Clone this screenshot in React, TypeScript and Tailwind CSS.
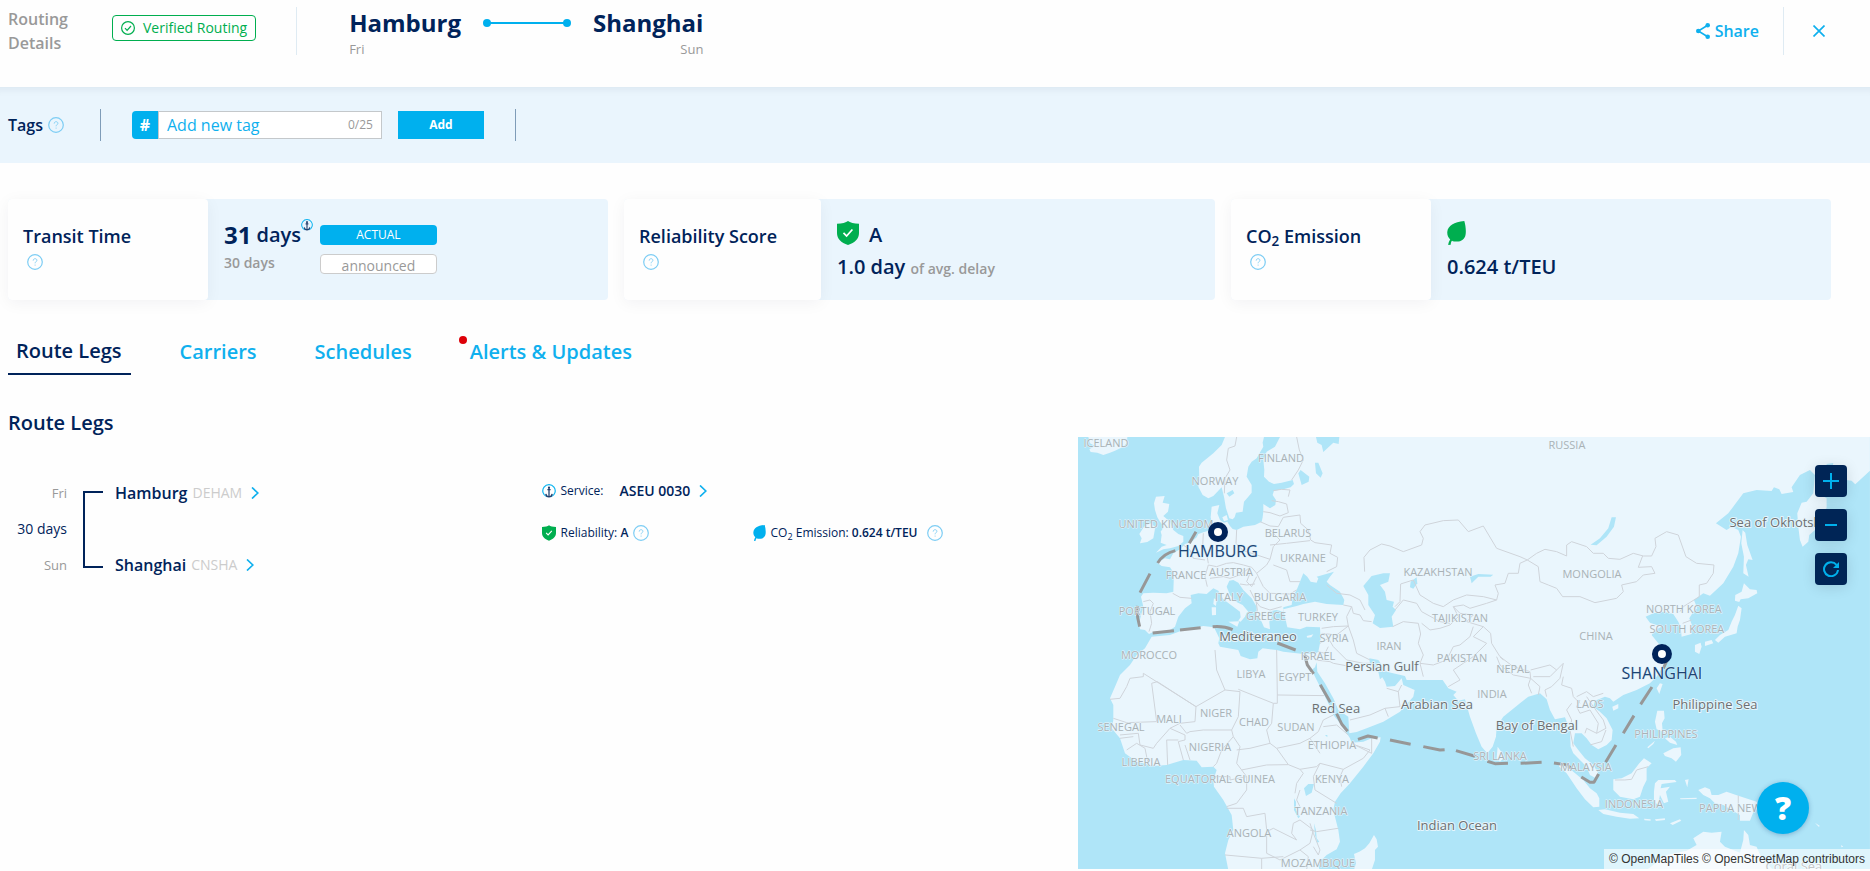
import type { ReactNode } from "react";

/* ---------- icons ---------- */

function HelpIcon({ className = "" }: { className?: string }) {
  return (
    <svg viewBox="0 0 16 16" className={`size-4 shrink-0 ${className}`} fill="none" stroke="#7dcdf4" aria-hidden="true">
      <circle cx="8" cy="8" r="7.3" strokeWidth="1.2" />
      <path d="M6.2 6.6c0-1.2.8-1.9 1.9-1.9s1.8.7 1.8 1.6c0 1.3-1.8 1.5-1.8 3M8.1 10.6v1" strokeWidth="0.9" />
    </svg>
  );
}

function ShieldIcon({ className }: { className: string }) {
  return (
    <svg viewBox="0 0 22 24" className={className} aria-hidden="true">
      <path d="M11 0C13 1.500 17 2.700 22 2.700V12c0 5.500-4 9.800-11 12C4 21.800 0 17.500 0 12V2.700C5 2.700 9 1.500 11 0z" fill="#00ae4f" />
      <path d="m6.500 11.800 3.100 3.300 5.800-6.600" fill="none" stroke="#fff" strokeWidth="1.700" />
    </svg>
  );
}

function LeafIcon({ className }: { className: string }) {
  return (
    <svg viewBox="0 0 19 24" className={className} fill="currentColor" aria-hidden="true">
      <path d="M17.300 0c1.300 4.500 1.900 9.500 1.300 13.500-.7 4.800-4.300 7.200-9 7.100-1.800 0-3.500-.2-4.600-.8-.9 1-1.200 2.200-1.300 3.900l-2.500.2c.2-2 .9-4 2-5.500C1.200 16.500 0 14 .3 10.800.9 4.700 7 .900 17.300 0z" />
    </svg>
  );
}

function AnchorIcon({ className }: { className: string }) {
  return (
    <svg viewBox="0 0 14 14" className={className} fill="none" aria-hidden="true">
      <path d="M4.800 12.700A6.200 6.200 0 1 1 9.200 12.700" stroke="#0db4f0" strokeWidth="1.200" />
      <path d="M7 3.500v9.300M5.400 5.700h3.200M3.800 9.800c.3 2 1.400 3 3.200 3s2.900-1 3.200-3" stroke="#24406e" strokeWidth="1.300" />
      <circle cx="7" cy="3.500" r="1.100" fill="#24406e" />
    </svg>
  );
}

function Chevron() {
  return (
    <svg viewBox="0 0 8 12" className="h-3 w-2 shrink-0" fill="none" stroke="#0fb0ee" strokeWidth="1.700" aria-hidden="true">
      <path d="m1 .5 5.800 5.500L1 11.500" />
    </svg>
  );
}

/* ---------- summary cards ---------- */

function Card({ title, children }: { title: ReactNode; children: ReactNode }) {
  return (
    <section className="grid h-[101px] grid-cols-[1fr_2fr] rounded-sm bg-[#eaf5fd]">
      <div className="rounded-sm bg-[#fefefe] pt-[23px] pl-[15px] shadow-[0_3px_16px_rgba(0,20,60,0.05)]">
        <h2 className="text-lg/7 font-semibold">{title}</h2>
        <button type="button" aria-label="More information" className="mt-1 ml-1 block">
          <HelpIcon />
        </button>
      </div>
      <div className="pl-4">{children}</div>
    </section>
  );
}

const Co2 = () => (
  <>
    CO<sub className="bottom-[-3px] text-[0.75em]">2</sub>
  </>
);

/* ---------- map ---------- */

const mainland =
  "M465 21 455 45 430 70 395 98 387 110 388 150 385 170 398 195 415 205 430 198 445 182 455 172 462 200 468 235 478 265 488 268 494 262 498 248 518 245 522 215 535 200 545 188 545 165 530 140 535 110 545 95 560 85 580 50 578 38 582 21 630 21 615 50 590 65 580 90 583 120 582 140 597 155 612 162 635 158 668 150 672 162 662 172 640 178 612 182 608 195 618 210 616 225 600 235 580 222 580 245 578 262 575 275 555 285 520 290 500 300 488 297 480 288 472 275 462 278 450 270 442 250 448 225 425 230 422 262 428 290 415 302 400 307 385 312 380 322 365 335 345 342 330 358 310 370 300 388 285 385 262 398 275 408 300 412 312 430 310 485 290 490 250 488 220 490 213 500 220 530 207 580 210 598 225 600 237 612 250 606 300 600 315 590 325 560 345 535 365 520 362 495 385 490 410 492 430 475 445 482 460 508 490 530 510 545 512 562 505 572 512 575 525 560 530 548 535 545 518 525 498 515 480 495 470 470 478 452 490 450 505 458 520 480 545 505 560 530 560 555 575 575 582 592 600 598 598 575 605 560 595 545 620 540 640 545 640 532 665 525 668 500 680 480 690 455 700 430 712 440 722 455 740 458 745 445 740 440 792 425 780 440 770 455 780 465 810 485 823 510 820 525 770 522 735 515 700 522 680 528 640 538 645 560 652 592 690 598 710 590 750 592 752 630 745 665 735 672 700 672 640 665 620 660 578 655 565 665 562 685 540 688 512 678 505 660 450 650 445 640 448 625 432 592 400 588 340 600 300 615 245 620 225 655 200 675 180 705 150 735 135 770 120 805 130 825 130 870 125 895 150 925 165 970 200 995 250 1008 290 1005 340 990 380 992 395 1012 430 1010 440 1020 430 1050 432 1070 460 1110 485 1155 490 1200 475 1230 465 1270 475 1320 748 1320 745 1300 770 1275 800 1258 810 1235 805 1200 795 1160 790 1140 795 1115 812 1090 840 1060 880 1010 910 970 930 935 932 922 905 925 880 935 845 938 840 925 815 885 790 855 780 830 760 790 740 750 725 720 735 712 740 697 742 725 765 760 790 805 805 840 835 860 838 910 860 906 890 895 940 875 990 845 1030 800 1034 780 1000 765 995 745 975 768 950 770 945 755 937 742 930 748 925 725 900 700 898 685 925 690 950 725 1005 738 1010 750 1040 750 1118 750 1135 775 1160 785 1150 795 1165 812 1185 808 1200 860 1218 910 1235 950 1252 970 1268 950 1278 920 1280 890 1300 860 1350 820 1375 800 1410 790 1430 808 1440 840 1455 868 1485 862 1500 900 1502 950 1510 970 1530 990 1550 1010 1560 1035 1578 1045 1585 1030 1570 1005 1545 985 1525 960 1510 940 1515 910 1535 910 1550 925 1565 945 1585 958 1610 945 1625 930 1628 900 1610 865 1590 845 1570 830 1575 812 1605 800 1620 805 1630 815 1660 795 1700 780 1740 760 1760 740 1785 700 1792 660 1765 640 1745 615 1755 600 1775 590 1740 578 1727 560 1750 550 1780 545 1810 552 1825 575 1832 590 1835 620 1865 612 1868 590 1858 565 1870 545 1882 535 1872 510 1900 490 1920 497 1960 460 1990 410 2005 370 2013 320 2005 300 1985 290 1970 300 1938 280 1975 250 2020 190 2060 180 2105 183 2112 172 2128 178 2135 192 2170 186 2165 172 2190 135 2220 120 2235 135 2230 190 2210 215 2195 218 2182 250 2185 290 2190 330 2198 350 2215 335 2218 315 2235 300 2245 250 2270 235 2270 205 2258 198 2270 175 2330 150 2345 152 2356 163 2400 122 2400 21Z";

const islands = [
  // Iceland, Great Britain, Ireland
  "M55 21 60 40 75 48 58 58 62 66 82 68 100 75 120 68 135 62 160 50 170 40 172 21Z",
  "M258 200 284 198 278 218 298 222 294 245 280 258 300 275 310 300 325 312 340 318 340 335 325 348 300 355 280 358 258 368 275 350 290 345 272 338 275 315 272 305 282 290 270 275 262 262 255 240 252 220Z",
  "M222 290 240 280 256 290 250 325 232 336 210 340 215 325 208 312Z",
  // Mediterranean islands and Zealand
  "M432 505 440 510 438 528 430 522ZM425 532 438 532 438 555 426 556ZM475 575 508 574 502 590ZM598 610 625 612 625 616 600 615ZM710 618 722 615 730 613 724 622 712 623ZM457 262 470 255 474 270 462 274Z",
  // Madagascar
  "M912 1215 920 1228 924 1250 915 1260 915 1290 905 1320 852 1320 858 1300 852 1272 868 1265 885 1255 898 1240Z",
  // Sri Lanka, Hainan, Taiwan
  "M1283 950 1296 968 1300 985 1290 995 1280 985ZM1627 830 1645 822 1645 835 1630 842ZM1770 760 1778 762 1768 792 1760 775Z",
  // Sumatra and Java
  "M1465 1000 1495 1010 1510 1025 1540 1050 1560 1075 1580 1090 1588 1105 1588 1130 1570 1132 1545 1108 1520 1075 1490 1030 1468 1010Z",
  "M1585 1140 1605 1138 1650 1148 1690 1152 1708 1165 1680 1166 1640 1160 1600 1152ZM1722 1166 1742 1168 1742 1172 1724 1171ZM1755 1168 1785 1165 1785 1170 1758 1173ZM1800 1180 1830 1168 1834 1172 1808 1185Z",
  // Borneo and Sulawesi
  "M1630 1048 1655 1045 1685 1030 1708 1000 1722 985 1745 1000 1730 1015 1730 1050 1720 1070 1710 1100 1690 1108 1650 1100 1630 1080Z",
  "M1755 1060 1765 1050 1815 1050 1820 1056 1775 1062 1772 1075 1800 1070 1788 1085 1795 1115 1782 1120 1770 1095 1765 1125 1752 1115 1752 1085Z",
  // New Guinea and small neighbours
  "M1885 1080 1905 1072 1920 1078 1925 1095 1945 1095 1970 1085 2005 1097 2060 1115 2100 1150 2075 1150 2055 1135 2040 1172 2010 1172 2010 1155 1960 1125 1935 1120 1920 1105 1900 1095ZM1830 1105 1880 1103 1880 1107 1832 1108ZM1845 1050 1856 1048 1852 1072ZM2235 1178 2250 1188 2246 1190ZM2314 1245 2320 1250 2314 1252Z",
  // Philippines
  "M1762 842 1782 842 1784 865 1776 880 1778 900 1795 905 1790 910 1760 898 1755 875ZM1732 952 1755 932 1750 942 1735 955ZM1785 925 1800 920 1818 935 1822 945 1800 938ZM1780 970 1810 955 1832 952 1834 975 1818 995 1805 985 1785 978Z",
  // Australia
  "M1730 1320 1790 1275 1850 1262 1880 1245 1870 1225 1900 1205 1925 1208 1955 1205 1950 1235 1965 1250 2010 1268 2020 1230 2022 1200 2035 1215 2040 1245 2060 1250 2075 1285 2110 1320Z",
  // Sakhalin, Japan
  "M2018 300 2026 308 2032 345 2048 390 2035 388 2028 405 2036 440 2020 430 2022 380 2014 340Z",
  "M2022 460 2040 478 2060 480 2062 490 2035 505 2012 508 2008 516 1995 512 1996 495 2015 485ZM2005 527 2015 535 2010 570 2003 590 2000 610 1965 620 1945 638 1935 630 1950 615 1975 600 1985 575 1995 555ZM1905 635 1925 630 1930 640 1905 648ZM1875 645 1892 638 1895 650 1888 672 1875 665Z",
];

const lakes = [
  "M738 21 808 21 806 42 790 38 760 66 755 45 742 38Z",
  "M685 130 692 120 718 140 716 155 695 165ZM735 98 745 98 758 130 752 143 738 130ZM470 190 488 180 493 190 478 200Z",
  "M905 438 940 430 960 430 955 455 930 465 945 485 950 510 972 515 968 530 978 540 965 560 970 590 930 594 908 580 915 555 895 525 895 495 880 468Z",
  "M1022 455 1040 442 1042 460 1030 476 1020 472Z",
  "M1200 440 1225 432 1270 434 1262 440 1225 440 1205 460ZM1562 344 1590 325 1615 295 1625 262 1638 262 1632 290 1610 320 1580 346Z",
  "M702 1075 715 1062 732 1062 725 1088 708 1098ZM672 1105 678 1115 678 1140 690 1160 685 1165 672 1140ZM732 1180 738 1200 740 1225 748 1235 742 1238 735 1215ZM765 915 772 915 772 922Z",
  "M2270 102 2290 99 2288 112 2270 112Z",
  "M1150 935 1160 935 1160 942Z",
];

const borders =
  "M500 21 495 48 475 55 470 90 480 120 465 145 463 190M680 21 688 60 700 90 685 120 665 150M610 182 635 178 660 180 655 200M605 212 625 215 650 222 655 248M580 245 600 248 630 258 655 248M570 275 600 288 625 290 640 262 690 255 692 280 715 300 722 330 735 338 785 345 780 370 803 382 800 410 770 425M500 300 498 340 520 362 570 378 600 388 610 350 630 330 600 300M600 345 650 340 720 332M600 388 590 405 560 430 545 412 520 405 490 398 470 400 440 410 415 405 405 440 412 470M400 310 398 350 410 370 415 400M340 345 360 360 370 385 405 390M420 445 460 440 480 445 510 435 540 412M540 430 530 455 545 470 560 440M560 430 580 470 600 490 660 492 680 480M610 405 650 420 660 455 690 455M510 462 530 465 555 462M540 480 555 510 570 530 600 540 635 530M555 490 562 540 560 550M308 490 330 502 365 505M220 515 240 510 250 520 240 545 245 580 237 605M770 465 800 490 840 495 870 510 885 540M820 525 845 530 850 550 870 555 880 572 905 575M845 530 830 560 835 588 790 590 755 595M835 588 850 630 860 670 900 690M755 610 800 615 835 588M750 640 775 625 790 650 830 690 880 700 905 700M745 665 765 670 775 650M735 690 780 695 790 700 870 715M884 425 882 382 900 360 935 342 960 348 1000 365 1055 345 1060 325 1050 305 1065 285 1120 272 1165 270 1195 305 1240 288 1280 355 1350 380 1372 390 1400 370 1425 358 1460 365 1490 378 1490 345 1505 335 1550 350 1570 370 1600 370 1615 385 1650 388 1690 370 1720 378 1745 378 1758 350 1755 325 1790 305 1825 315 1848 380 1880 400 1932 405 1930 430 1910 460 1888 465 1888 500 1840 530 1830 545M1372 390 1405 410 1410 455 1435 465 1460 475 1478 500 1530 500 1575 518 1640 505 1660 485 1655 465 1700 455 1720 435 1755 430 1745 410 1705 412 1718 378M1372 390 1350 400 1345 430 1315 430 1305 460 1275 465 1285 490 1280 510 1240 500 1190 495 1150 510 1120 530 1090 520 1050 495 1030 450 992 462 990 515 975 530M975 540 1000 510 1040 520 1055 545 1110 575 1140 580M968 590 1000 575 1045 580 1052 612 1045 640 1060 675 1050 700 1060 740M1055 580 1080 600 1110 595 1140 585 1165 560 1150 530 1180 525 1200 535 1250 520 1280 510M1150 530 1170 550 1210 555 1190 575 1240 590 1262 610 1265 640 1290 680 1300 690M1050 700 1090 705 1130 690 1150 650 1170 645 1200 620 1210 590M1240 590 1210 620 1250 640 1210 680 1180 700 1150 720 1170 750 1135 770M1290 680 1330 710 1380 725 1382 745 1330 735 1290 705 1280 680M1382 720 1440 705 1460 720 1440 740 1390 740M1382 745 1410 770 1405 795M1382 745 1375 765 1385 790M1460 720 1480 700 1470 745 1445 770 1425 780 1430 800M1480 740 1475 765 1505 775 1510 800 1530 820M1505 820 1490 840 1505 870 1500 900 1510 950M1530 810 1520 830 1530 850 1560 840 1585 880 1580 910 1550 895 1545 910M1520 800 1550 785 1570 800 1600 790M1550 800 1570 830 1600 870 1608 895 1580 910M1560 945 1595 935 1608 900M1635 1050 1665 1050 1685 1048 1700 1020 1735 1010M2005 1097 2005 1170M1865 570 1838 580M840 870 900 855 945 835 990 830 985 785 950 775M945 835 955 860M985 785 995 765M620 660 622 795 762 797M622 795 622 820 610 820 505 778M435 660 440 720 465 780 510 785 505 860 485 900M465 780 378 830 220 730 220 740 180 745 170 770 150 805 120 808M245 760 262 755 378 830M245 760 260 875 170 878 130 865M378 830 375 875 330 880 300 895 260 940 250 955 210 945 205 910 150 915M330 885 350 910 360 905 400 900 485 900 490 920 455 960 440 1000 430 1010M300 895 345 915 345 930 325 935 340 990M290 930 325 930M290 930 293 1005M345 945 360 990M170 960 200 940 225 955 235 1005M150 925 190 920M610 820 605 880 590 900 600 940 620 955 690 940 720 925 750 970M490 920 510 950 500 1000 515 1020 590 1005 655 1004 690 1018 740 1010 750 1000 820 1018 880 985 900 960 855 945M620 955 655 1004M500 960 540 955 600 940M750 1000 730 1040 735 1080 800 1120M690 1018 700 1030 680 1060 675 1090M815 1070 810 1040 820 1018M720 925 745 905 760 870 790 855M760 890 800 885 835 915M905 925 905 970 855 945M430 1040 480 1040 480 1050 530 1040 515 1020M530 1040 530 1080 500 1120 470 1130M470 1135 520 1135 530 1160 585 1150 590 1200 590 1270 630 1290 690 1260 720 1240 730 1200 690 1170 670 1180 665 1210 680 1230 610 1195 590 1205M465 1275 575 1285 640 1280M575 1285 575 1320M690 1080 680 1110 690 1130M720 1200 740 1205 805 1195M720 1180 730 1210 750 1260 745 1275 730 1250M690 1260 715 1280 710 1320";

const route =
  "M378 305 358 340M316 362C295 367 276 378 263 399M240 431 210 488M202 528C200 550 203 570 209 590M248 609 312 602M330 600 392 593M428 590C450 588 470 591 488 599M524 607 584 626M622 639 677 660M704 675 712 705 731 732M751 764 781 817M800 851 815 882 833 904M864 928 894 918 923 924M960 930 1022 943M1060 950 1110 960 1124 959M1158 962 1215 979M1252 994 1275 1001 1314 1000M1352 1000 1415 997M1452 999 1485 1004 1506 1015M1534 1041 1560 1057 1572 1057 1586 1032M1607 997 1638 945M1660 910 1692 857M1712 823 1746 771M1780 715 1792 690";

const countries: [string, number, number][] = [
  ["ICELAND", 28, 10], ["FINLAND", 203, 25], ["NORWAY", 137, 48], ["UNITED KINGDOM", 88, 91], ["BELARUS", 210, 100],
  ["UKRAINE", 225, 125], ["FRANCE", 108, 142], ["AUSTRIA", 153, 139], ["ITALY", 151, 164], ["BULGARIA", 202, 164],
  ["GREECE", 188, 183], ["TURKEY", 240, 184], ["PORTUGAL", 69, 178], ["MOROCCO", 71, 222], ["SYRIA", 256, 205],
  ["ISRAEL", 240, 223], ["IRAN", 311, 213], ["KAZAKHSTAN", 360, 139], ["TAJIKISTAN", 382, 185], ["PAKISTAN", 384, 225],
  ["NEPAL", 435, 236], ["INDIA", 414, 261], ["CHINA", 518, 203], ["MONGOLIA", 514, 141], ["RUSSIA", 489, 12],
  ["NORTH KOREA", 606, 176], ["SOUTH KOREA", 609, 196], ["LAOS", 512, 271], ["PHILIPPINES", 588, 301], ["MALAYSIA", 508, 334],
  ["SRI LANKA", 422, 323], ["INDONESIA", 556, 371], ["PAPUA NEW GUINEA", 674, 375], ["LIBYA", 173, 241], ["EGYPT", 217, 244],
  ["MALI", 91, 286], ["NIGER", 138, 280], ["CHAD", 176, 289], ["SUDAN", 218, 294], ["SENEGAL", 43, 294],
  ["NIGERIA", 132, 314], ["LIBERIA", 63, 329], ["ETHIOPIA", 254, 312], ["EQUATORIAL GUINEA", 142, 346], ["KENYA", 254, 346],
  ["TANZANIA", 243, 378], ["ANGOLA", 171, 400], ["MOZAMBIQUE", 240, 430],
];

const seas: [string, number, number][] = [
  ["Mediteraneo", 180, 204], ["Persian Gulf", 304, 234], ["Red Sea", 258, 276], ["Arabian Sea", 359, 272],
  ["Bay of Bengal", 459, 293], ["Philippine Sea", 637, 272], ["Indian Ocean", 379, 393], ["Coral Sea", 716, 434],
  ["Sea of Okhotsk", 697, 90],
];

const ports: [string, number, number][] = [
  ["HAMBURG", 140, 95],
  ["SHANGHAI", 584, 217],
];

function RouteMap() {
  return (
    <svg viewBox="0 0 792 432" preserveAspectRatio="xMidYMid slice" className="block w-full" role="img" aria-label="Route map">
      <rect width="792" height="432" fill="#afe5f8" />
      <g transform="translate(-8 -7) scale(0.333333)">
        <g fill="#eaf6fd">
          <path d={mainland} />
          {islands.map((d) => (
            <path key={d} d={d} />
          ))}
        </g>
        <g fill="#afe5f8">
          {lakes.map((d) => (
            <path key={d} d={d} />
          ))}
        </g>
        <path d={borders} fill="none" stroke="#cfd4da" strokeWidth="3" strokeLinejoin="round" />
        <path d={route} fill="none" stroke="#979797" strokeWidth="9" strokeLinejoin="round" />
      </g>
      <g textAnchor="middle" strokeLinejoin="round">
        <g fill="#a9b2b6" stroke="#eaf6fd" strokeWidth="1" className="text-[11px] [paint-order:stroke]">
          {countries.map(([name, x, y]) => (
            <text key={name} x={x} y={y}>
              {name}
            </text>
          ))}
        </g>
        <g fill="#6c7072" stroke="#e6f5fc" strokeWidth="2" className="text-[13px] [paint-order:stroke]">
          {seas.map(([name, x, y]) => (
            <text key={name} x={x} y={y}>
              {name}
            </text>
          ))}
        </g>
        {ports.map(([name, x, y]) => (
          <g key={name}>
            <circle cx={x} cy={y} r="10" fill="#00235a" />
            <circle cx={x} cy={y} r="4" fill="#fff" />
            <text x={x} y={y + 25} fill="#1c4474" stroke="#d5effa" strokeWidth="1" className="text-base [paint-order:stroke]">
              {name}
            </text>
          </g>
        ))}
      </g>
    </svg>
  );
}

function MapButton({ label, children }: { label: string; children: ReactNode }) {
  return (
    <button
      type="button"
      aria-label={label}
      className="flex size-8 items-center justify-center rounded-sm bg-[#002556] shadow-[0_2px_14px_rgba(0,0,0,0.12)]"
    >
      <svg viewBox="0 0 16 16" className="size-4" fill="none" stroke="#00b0ec" strokeWidth="2" aria-hidden="true">
        {children}
      </svg>
    </button>
  );
}

/* ---------- page ---------- */

export default function App() {
  return (
    <div className="min-h-screen bg-[#fefefe] font-['Open_Sans','Noto_Sans',sans-serif] text-[#00235a]">
      <header className="flex h-[87px] items-start pr-[45px] pl-2">
        <h1 className="w-[104px] pt-[7px] pr-8 text-base/6 font-semibold text-[#999]">Routing Details</h1>
        <span className="mt-[15px] flex h-[26px] items-center gap-2 rounded border border-[#00ae4f] px-2 text-sm whitespace-nowrap text-[#00ae4f]">
          <svg viewBox="0 0 14 14" className="size-3.5" fill="none" stroke="currentColor" aria-hidden="true">
            <circle cx="7" cy="7" r="6.400" strokeWidth="1.200" />
            <path d="m4 7.200 2.100 2.200L10 5" strokeWidth="1.200" />
          </svg>
          Verified Routing
        </span>
        <span className="mt-[7px] mr-[52px] ml-10 h-12 w-px bg-[#dfebf3]" />
        <div className="pt-[7px]">
          <div className="text-2xl/8 font-bold">Hamburg</div>
          <div className="text-[13px]/5 text-[#999]">Fri</div>
        </div>
        <svg viewBox="0 0 88 8" className="mx-[22px] mt-[19px] h-2 w-[88px]" fill="#00b0ee" aria-hidden="true">
          <path d="M4 3h80v2H4z" />
          <circle cx="4" cy="4" r="4" />
          <circle cx="84" cy="4" r="4" />
        </svg>
        <div className="pt-[7px] text-right">
          <div className="text-2xl/8 font-bold">Shanghai</div>
          <div className="text-[13px]/5 text-[#999]">Sun</div>
        </div>
        <div className="ml-auto flex items-center pt-[7px] text-[#0fb0ee]">
          <button type="button" className="flex items-center gap-[5px] text-base font-semibold">
            <svg viewBox="0 0 14 16" className="h-4 w-3.5" fill="currentColor" aria-hidden="true">
              <circle cx="11.700" cy="2.300" r="2.300" />
              <circle cx="2.300" cy="8" r="2.300" />
              <circle cx="11.700" cy="13.700" r="2.300" />
              <path d="M11.700 2.300 2.300 8l9.400 5.700" fill="none" stroke="currentColor" strokeWidth="1.600" />
            </svg>
            Share
          </button>
          <span className="mr-[29px] ml-6 h-12 w-px bg-[#dfebf3]" />
          <button type="button" aria-label="Close">
            <svg viewBox="0 0 12 12" className="size-3" fill="none" stroke="currentColor" strokeWidth="1.700" aria-hidden="true">
              <path d="m.5.5 11 11M11.500.5l-11 11" />
            </svg>
          </button>
        </div>
      </header>

      <form className="flex h-[76px] items-center bg-[#eaf5fd] px-2 shadow-[inset_0_10px_8px_-8px_rgba(0,30,50,0.07)]">
        <label htmlFor="tag" className="text-base font-semibold">
          Tags
        </label>
        <button type="button" aria-label="About tags" className="ml-[5px]">
          <HelpIcon />
        </button>
        <span className="mr-[31px] ml-9 h-8 w-px bg-[#7f9cb8]" />
        <span className="flex h-7 w-[250px]">
          <span className="flex w-[26px] items-center justify-center rounded-l bg-[#00b0ee] text-base font-bold text-white">#</span>
          <span className="flex min-w-0 flex-1 items-center border border-[#c4c8cb] bg-white px-2">
            <input
              id="tag"
              type="text"
              placeholder="Add new tag"
              className="w-full min-w-0 bg-transparent text-base outline-none placeholder:text-[#0fb0ee]"
            />
            <span className="text-xs text-[#999]">0/25</span>
          </span>
        </span>
        <button type="submit" className="ml-4 h-7 w-[86px] bg-[#00b0ee] text-xs font-bold text-white">
          Add
        </button>
        <span className="ml-[31px] h-8 w-px bg-[#7f9cb8]" />
      </form>

      <div className="grid grid-cols-[600fr_591fr_600fr] gap-4 pt-9 pr-[39px] pl-2">
        <Card title="Transit Time">
          <div className="grid grid-cols-[auto_117px] justify-start gap-x-[7px] pt-5">
            <div className="flex items-start text-xl/8 font-semibold">
              <span className="mr-[5px] text-2xl/8 font-bold">31</span>days
              <AnchorIcon className="size-3" />
            </div>
            <span className="mt-1.5 flex h-5 items-center justify-center rounded bg-[#00b0ee] text-xs text-white">ACTUAL</span>
            <div className="text-sm/6 font-semibold text-[#999]">30 days</div>
            <span className="mt-[3px] flex h-5 items-center justify-center rounded border border-[#ccc] bg-white pt-1 text-sm text-[#999]">
              announced
            </span>
          </div>
        </Card>
        <Card title="Reliability Score">
          <div className="flex items-center gap-2.5 pt-5 text-xl/8 font-semibold">
            <ShieldIcon className="-mt-1 h-6 w-[22px]" />A
          </div>
          <div className="text-xl/8 font-semibold">
            1.0 day <span className="text-sm text-[#999]">of avg. delay</span>
          </div>
        </Card>
        <Card
          title={
            <>
              <Co2 /> Emission
            </>
          }
        >
          <div className="flex h-[52px] items-start pt-[22px] text-[#00ae4f]">
            <LeafIcon className="h-6 w-[19px]" />
          </div>
          <div className="text-xl/8 font-semibold">0.624 t/TEU</div>
        </Card>
      </div>

      <nav className="flex gap-[41px] pt-[33px] pl-2 text-xl/9 font-semibold text-[#0fb0ee]">
        <a href="#legs" aria-current="page" className="border-b-2 border-[#00235a] pr-[9px] pb-1 pl-2 text-[#00235a]">
          Route Legs
        </a>
        <a href="#carriers" className="pt-px pr-[9px] pl-2">
          Carriers
        </a>
        <a href="#schedules" className="pt-px pr-[9px] pl-2">
          Schedules
        </a>
        <a href="#alerts" className="relative pt-px pr-[9px] pl-2">
          <span className="absolute top-[3px] -left-[3px] size-2 rounded-full bg-[#dd0008]" />
          Alerts &amp; Updates
        </a>
      </nav>

      <h2 id="legs" className="pt-[34px] pl-2 text-xl/7 font-semibold">
        Route Legs
      </h2>

      <main className="flex items-start">
        <div className="grid flex-1 grid-cols-2 pr-[3px] pl-2">
          <div className="flex pt-[42px]">
            <div className="flex h-[100px] w-[59px] flex-col justify-between text-right">
              <span className="text-[13px]/7 text-[#999]">Fri</span>
              <span className="text-sm/7">30 days</span>
              <span className="text-[13px]/7 text-[#999]">Sun</span>
            </div>
            <div className="mt-3 mr-3 ml-4 h-[77px] w-5 border-2 border-r-0 border-[#00235a]" />
            <div className="flex h-[100px] flex-col justify-between">
              <a href="#deham" className="flex items-center text-base/7 font-semibold">
                Hamburg
                <span className="mr-[9px] ml-[5px] text-sm font-normal text-[#ccc]">DEHAM</span>
                <Chevron />
              </a>
              <a href="#cnsha" className="flex items-center text-base/7 font-semibold">
                Shanghai
                <span className="mr-[9px] ml-[5px] text-sm font-normal text-[#ccc]">CNSHA</span>
                <Chevron />
              </a>
            </div>
          </div>
          <div className="pt-11 text-xs/5">
            <div className="flex items-center">
              <AnchorIcon className="mr-[5px] size-3.5" />
              Service:
              <a href="#aseu" className="ml-4 flex items-center gap-[9px] text-sm/5 font-semibold">
                ASEU 0030 <Chevron />
              </a>
            </div>
            <div className="mt-[22px] flex">
              <div className="flex w-[211px] items-center">
                <ShieldIcon className="mr-[5px] h-4 w-3.5" />
                <span>
                  Reliability: <b className="font-semibold">A</b>
                </span>
                <HelpIcon className="ml-[5px]" />
              </div>
              <div className="flex items-center text-[#00b0ee]">
                <LeafIcon className="mr-[5px] h-4 w-[13px]" />
                <span className="whitespace-nowrap text-[#00235a]">
                  <Co2 /> Emission: <b className="font-semibold">0.624 t/TEU</b>
                </span>
                <HelpIcon className="ml-[9px]" />
              </div>
            </div>
          </div>
        </div>

        <div className="relative w-[42.35%] overflow-hidden">
          <RouteMap />
          <div className="absolute top-7 right-[23px] flex flex-col gap-3">
            <MapButton label="Zoom in">
              <path d="M8 0v16M0 8h16" />
            </MapButton>
            <MapButton label="Zoom out">
              <path d="M2 8h12" />
            </MapButton>
            <MapButton label="Reset view">
              <path d="M13.500 3.800A7 7 0 1 0 15 9" />
              <path d="M16 1v6h-6z" fill="#00b0ec" stroke="none" />
            </MapButton>
          </div>
          <button
            type="button"
            aria-label="Help"
            className="absolute right-[61px] bottom-[35px] flex size-[52px] items-center justify-center rounded-full bg-[#00b0ee] text-[32px] font-extrabold text-white shadow-[0_1px_5px_rgba(0,60,120,0.3)]"
          >
            ?
          </button>
          <div className="absolute right-0 bottom-0 bg-white/60 px-[5px] font-['Liberation_Sans',Arial,sans-serif] text-xs/5 text-[#333]">
            <a href="#tiles">© OpenMapTiles</a> <a href="#osm">© OpenStreetMap contributors</a>
          </div>
        </div>
      </main>
    </div>
  );
}
